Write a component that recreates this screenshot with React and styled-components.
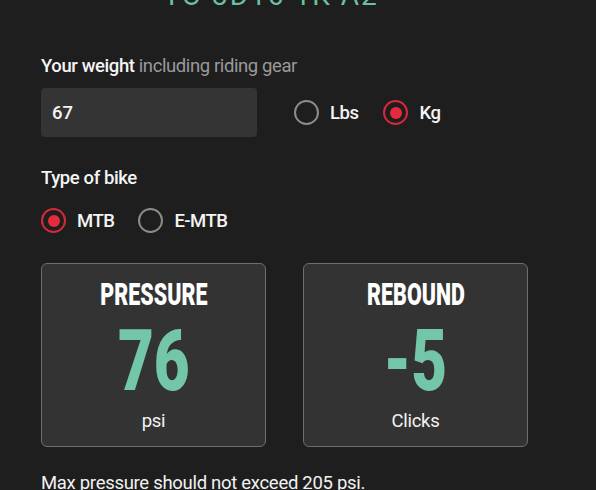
import React, { useState } from "react";
import styled, { createGlobalStyle } from "styled-components";

const GlobalStyle = createGlobalStyle`
  html, body {
    margin: 0;
    padding: 0;
    background: #1e1e1e;
    overflow: hidden;
  }
  body {
    font-family: Roboto, "Liberation Sans", sans-serif;
    color: #f2f2f2;
  }
`;

const Page = styled.div`
  width: 487px;
  padding-left: 41px;
  display: flex;
  flex-direction: column;
`;

const Title = styled.h1`
  margin: -18px 0 0;
  padding-right: 27px;
  font-size: 28px;
  line-height: 28px;
  font-weight: 400;
  letter-spacing: 2px;
  text-align: center;
  color: #6fbfa3;
`;

const Label = styled.div`
  margin-top: ${(p) => p.$top}px;
  font-size: 18.5px;
  line-height: 23px;
  font-weight: 500;
  letter-spacing: -0.4px;
  color: #f4f4f4;
  span {
    font-weight: 400;
    color: #9a9a9a;
  }
`;

const Row = styled.div`
  display: flex;
  align-items: center;
  margin-top: ${(p) => p.$top}px;
  gap: ${(p) => p.$gap}px;
`;

const WeightInput = styled.input`
  width: 216px;
  height: 49px;
  box-sizing: border-box;
  padding: 0 11px;
  border: none;
  border-radius: 4px;
  outline: none;
  background: #343434;
  color: #f4f4f4;
  font-family: Roboto, "Liberation Sans", sans-serif;
  font-size: 18.5px;
  font-weight: 500;
  margin-right: 37px;
`;

const Option = styled.label`
  display: flex;
  align-items: center;
  gap: 11px;
  font-size: 18.5px;
  font-weight: 500;
  letter-spacing: -0.5px;
  color: #f4f4f4;
  cursor: pointer;
`;

const Circle = styled.span`
  width: 25px;
  height: 25px;
  box-sizing: border-box;
  border-radius: 50%;
  border: 2.5px solid ${(p) => (p.$on ? "#d8283b" : "#8c8c8c")};
  display: flex;
  align-items: center;
  justify-content: center;
  &::after {
    content: "";
    width: 12px;
    height: 12px;
    border-radius: 50%;
    background: #e32b3e;
    display: ${(p) => (p.$on ? "block" : "none")};
  }
`;

const Cards = styled.div`
  display: flex;
  gap: 37px;
  margin-top: 30px;
`;

const Card = styled.div`
  width: 225px;
  box-sizing: border-box;
  border: 1px solid #6e6e6e;
  border-radius: 6px;
  background: #333333;
  display: flex;
  flex-direction: column;
  align-items: center;
  padding: 14px 0 13px;
`;

const Condensed = styled.span`
  display: inline-block;
  font-weight: 900;
  line-height: 1;
`;

const CardTitle = styled(Condensed)`
  font-size: 32px;
  color: #ffffff;
  transform: scaleX(0.67);
`;

const CardValue = styled(Condensed)`
  margin-top: 8px;
  font-size: 86px;
  color: #74c6a8;
  transform: scaleX(0.72);
`;

const Unit = styled.span`
  margin-top: 6px;
  font-size: 18.5px;
  line-height: 23px;
  letter-spacing: -0.3px;
  color: #f2f2f2;
`;

const Note = styled.p`
  margin: 25px 0 0;
  font-size: 18.5px;
  line-height: 23px;
  letter-spacing: -0.3px;
  color: #f2f2f2;
`;

const Radio = ({ on, label, onClick }) => (
  <Option onClick={onClick}>
    <Circle $on={on} />
    {label}
  </Option>
);

export default function App() {
  const [unit, setUnit] = useState("kg");
  const [bike, setBike] = useState("mtb");
  const [weight, setWeight] = useState("67");

  return (
    <>
      <GlobalStyle />
      <Page>
        <Title>YO 3D16 1K A2</Title>
        <Label $top={45}>
          Your weight <span>including riding gear</span>
        </Label>
        <Row $top={10} $gap={0}>
          <WeightInput value={weight} onChange={(e) => setWeight(e.target.value)} />
          <Row $top={0} $gap={25}>
            <Radio on={unit === "lbs"} label="Lbs" onClick={() => setUnit("lbs")} />
            <Radio on={unit === "kg"} label="Kg" onClick={() => setUnit("kg")} />
          </Row>
        </Row>
        <Label $top={30}>Type of bike</Label>
        <Row $top={18} $gap={24}>
          <Radio on={bike === "mtb"} label="MTB" onClick={() => setBike("mtb")} />
          <Radio on={bike === "emtb"} label="E-MTB" onClick={() => setBike("emtb")} />
        </Row>
        <Cards>
          <Card>
            <CardTitle>PRESSURE</CardTitle>
            <CardValue>76</CardValue>
            <Unit>psi</Unit>
          </Card>
          <Card>
            <CardTitle>REBOUND</CardTitle>
            <CardValue>-5</CardValue>
            <Unit>Clicks</Unit>
          </Card>
        </Cards>
        <Note>Max pressure should not exceed 205 psi.</Note>
      </Page>
    </>
  );
}
